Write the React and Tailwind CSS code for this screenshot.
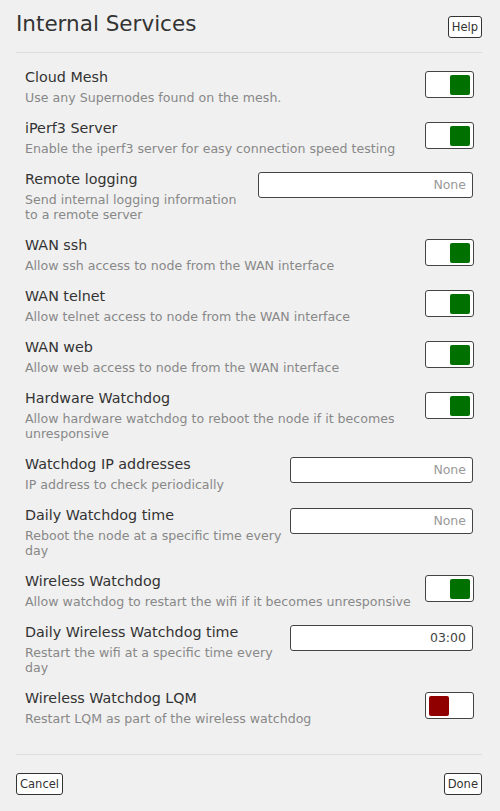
const rows = [
  { label: "Cloud Mesh", desc: "Use any Supernodes found on the mesh.", type: "toggle", on: true },
  { label: "iPerf3 Server", desc: "Enable the iperf3 server for easy connection speed testing", type: "toggle", on: true },
  { label: "Remote logging", desc: "Send internal logging information to a remote server", type: "input", wide: true, value: "" },
  { label: "WAN ssh", desc: "Allow ssh access to node from the WAN interface", type: "toggle", on: true },
  { label: "WAN telnet", desc: "Allow telnet access to node from the WAN interface", type: "toggle", on: true },
  { label: "WAN web", desc: "Allow web access to node from the WAN interface", type: "toggle", on: true },
  { label: "Hardware Watchdog", desc: "Allow hardware watchdog to reboot the node if it becomes unresponsive", type: "toggle", on: true },
  { label: "Watchdog IP addresses", desc: "IP address to check periodically", type: "input", value: "" },
  { label: "Daily Watchdog time", desc: "Reboot the node at a specific time every day", type: "input", value: "" },
  { label: "Wireless Watchdog", desc: "Allow watchdog to restart the wifi if it becomes unresponsive", type: "toggle", on: true },
  { label: "Daily Wireless Watchdog time", desc: "Restart the wifi at a specific time every day", type: "input", value: "03:00" },
  { label: "Wireless Watchdog LQM", desc: "Restart LQM as part of the wireless watchdog", type: "toggle", on: false },
];

const Toggle = ({ on }) => (
  <div className="mt-[4px] flex h-[27px] w-[49px] shrink-0 items-center rounded-[3px] border border-[#444] bg-white px-[3px]">
    <div
      className={
        on
          ? "ml-auto h-[20px] w-[20px] rounded-[2px] bg-[#007000]"
          : "h-[20px] w-[20px] rounded-[2px] bg-[#900000]"
      }
    />
  </div>
);

const Field = ({ value, wide }) => (
  <div
    className={
      (wide ? "w-[215px]" : "w-[183px]") +
      " mt-[3px] mr-[1px] flex h-[26px] shrink-0 items-center justify-end rounded-[3px] border border-[#444] bg-white px-[6px] text-[12.5px]"
    }
  >
    {value ? (
      <span className="text-[#444]">{value}</span>
    ) : (
      <span className="text-[#999]">None</span>
    )}
  </div>
);

const Btn = ({ children }) => (
  <button
    className="flex h-[22px] items-center rounded-[3px] border border-[#333] bg-white px-[3px] text-[12.8px] text-[#333]"
    style={{ fontFamily: '"DejaVu Sans Condensed", "DejaVu Sans", sans-serif' }}
  >
    {children}
  </button>
);

export default function App() {
  return (
    <div className="min-h-[811px] w-[500px] bg-[#f0f0f0] pl-[16px] pr-[18px] font-['DejaVu_Sans',sans-serif] text-[#333]">
      <div className="flex items-start justify-between pt-[10px] pb-[14px] border-b border-[#ddd]">
        <h1 className="text-[21.5px] leading-[28px] text-[#333]">Internal Services</h1>
        <div className="mt-[6px]">
          <Btn>Help</Btn>
        </div>
      </div>

      <div className="pt-[14px] pb-[15px] pl-[9px] pr-[8px] border-b border-[#ddd]">
        {rows.map((r) => (
          <div key={r.label} className="flex items-start justify-between gap-[8px] pb-[13px]">
            <div className="min-w-0 flex-1">
              <div className="text-[14.3px] leading-[20px] text-[#333]">{r.label}</div>
              <div className="mt-[3px] text-[12.6px] leading-[15px] text-[#888]">{r.desc}</div>
            </div>
            {r.type === "toggle" ? <Toggle on={r.on} /> : <Field value={r.value} wide={r.wide} />}
          </div>
        ))}
      </div>

      <div className="flex justify-between pt-[18px]">
        <Btn>Cancel</Btn>
        <Btn>Done</Btn>
      </div>
    </div>
  );
}
